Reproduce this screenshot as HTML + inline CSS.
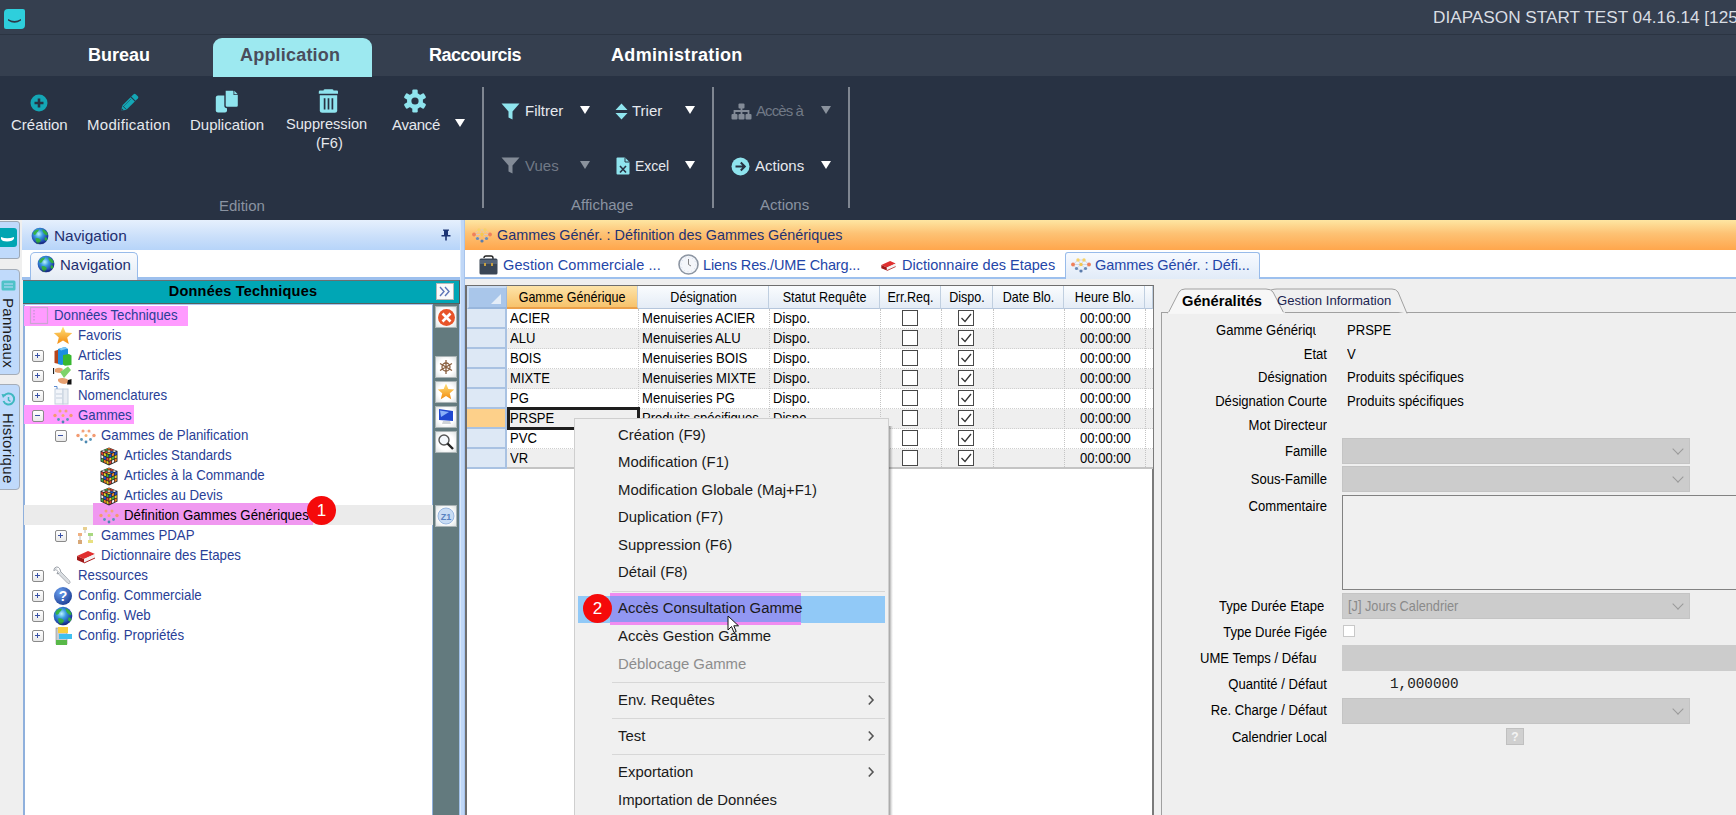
<!DOCTYPE html>
<html><head><meta charset="utf-8">
<style>
*{margin:0;padding:0;box-sizing:border-box}
html,body{width:1736px;height:815px;overflow:hidden;background:#283243;font-family:"Liberation Sans",sans-serif}
.a{position:absolute;white-space:nowrap}
#title{left:0;top:0;width:1736px;height:34px;background:#353f4f}
#tsep{left:0;top:34px;width:1736px;height:1px;background:#2b3442}
#tabs{left:0;top:35px;width:1736px;height:41px;background:#353f4f}
#ribbon{left:0;top:76px;width:1736px;height:144px;background:#283243}
.tab{font-weight:bold;font-size:18px;color:#fff;top:45px}
.rl{font-size:15px;color:#e6e9ee}
.gl{font-size:15px;color:#8a93a1}
.sep{width:2px;background:#7f8691;top:87px;height:121px}
.dd{width:0;height:0;border-left:5.5px solid transparent;border-right:5.5px solid transparent;border-top:8px solid #fff}
.ddg{border-top-color:#8a929d}
.tr{font-size:14.6px;color:#283e96;height:20px;line-height:20px;transform:scaleX(.908);transform-origin:0 50%}
.eb{width:12px;height:12px;border:1.5px solid #8a8a8a;border-radius:2px;background:linear-gradient(#fff,#e9e9e9)}
.eb:before{content:"";position:absolute;left:2px;top:3.8px;width:5px;height:1.3px;background:#3a52a8}
.eb.p:after{content:"";position:absolute;left:3.8px;top:2px;width:1.3px;height:5px;background:#3a52a8}
.vb{width:22px;height:22px;border:1px solid #a9b3b5;background:radial-gradient(#fff 55%,#dde2e3);left:435px}
.hl{background:#ff9bff}
.dt{font-size:14.5px;color:#2446a8;top:257px}
.gh{top:286px;height:23px;background:linear-gradient(#fafcfe,#e4ecf6);border-right:1px solid #c0cfe0;border-bottom:1px solid #b5c6dc}
.ght{top:286px;height:22px;font-size:14.6px;color:#000;line-height:22px;text-align:center;transform:scaleX(.86)}
.gc{font-size:15.2px;color:#000;height:20px;line-height:20px;transform:scaleX(.86);transform-origin:0 50%}
.cb{width:16px;height:16px;border:1.6px solid #484848;background:#fff}
.lb{font-size:15.2px;color:#000;text-align:right;height:18px;line-height:18px;transform:scaleX(.86);transform-origin:100% 50%}
.clip{overflow:hidden;height:18px}
.clip div{font-size:15.2px;color:#000;height:18px;line-height:18px;transform:scaleX(.86);transform-origin:0 50%}
.cmb{left:1342px;width:348px;height:26px;background:#cccccc;border:1px solid #c4c4c4}
.chev{width:8px;height:8px;border-right:1.2px solid #9a9a9a;border-bottom:1.2px solid #9a9a9a;transform:rotate(45deg)}
.mi{font-size:14.9px;color:#1a1a1a;left:618px;height:20px;line-height:20px}
.ms{left:612px;width:273px;height:1px;background:#d7d7d7}
</style></head><body>
<div class="a" id="title"></div>
<div class="a" id="tsep"></div>
<div class="a" id="tabs"></div>
<div class="a" id="ribbon"></div>
<!-- logo -->
<div class="a" style="left:4px;top:9px;width:21px;height:20px;background:#2ecfdc;border-radius:4px 2px 4px 2px"></div>
<svg class="a" style="left:4px;top:9px" width="21" height="20"><path d="M4 10 Q10.5 14 17 10 L17 11.5 Q10.5 16 4 11.5Z" fill="#2c3848"/></svg>
<div class="a" style="left:1433px;top:7px;font-size:17.2px;color:#d9dde3">DIAPASON START TEST 04.16.14 [125</div>
<!-- tabs -->
<div class="a" style="left:213px;top:38px;width:159px;height:39px;background:#9de9f0;border-radius:9px 9px 0 0"></div>
<div class="a tab" style="left:88px">Bureau</div>
<div class="a tab" style="left:240px;color:#4a4d5c;letter-spacing:0.2px">Application</div>
<div class="a tab" style="left:429px;letter-spacing:-0.5px">Raccourcis</div>
<div class="a tab" style="left:611px;letter-spacing:0.33px">Administration</div>
<!-- ribbon -->
<svg class="a" style="left:30px;top:94px" width="18" height="18" viewBox="0 0 18 18"><circle cx="9" cy="9" r="8.5" fill="#14a6b5"/><path d="M9 4.5V13.5M4.5 9H13.5" stroke="#283243" stroke-width="2.6"/></svg>
<svg class="a" style="left:119px;top:93px" width="20" height="20" viewBox="0 0 20 20"><g transform="rotate(-45 10 10)"><path d="M-1 10 L3.5 7 H15.2 V13 H3.5Z" fill="#14a6b5"/><path d="M16.2 7 H19.5 Q21 7 21 8.5 V11.5 Q21 13 19.5 13 H16.2Z" fill="#14a6b5"/><path d="M4 8.6 H14.5" stroke="#283243" stroke-width="0.7" opacity="0.6"/><path d="M3.5 7 V13" stroke="#283243" stroke-width="0.8"/><path d="M-1 10 L1.2 8.6 V11.4Z" fill="#283243"/></g></svg>
<div class="a rl" style="left:11px;top:116px">Création</div>
<div class="a rl" style="left:87px;top:116px;letter-spacing:0.3px">Modification</div>
<svg class="a" style="left:215px;top:89px" width="24" height="24" viewBox="0 0 24 24"><path d="M3 6.5 H12 V21.5 Q12 23.5 10 23.5 H3 Q0.8 23.5 0.8 21.5 V8.5 Q0.8 6.5 3 6.5Z" fill="#8fe4ee"/><path d="M10 1 H18.5 L23.5 6 V16.5 Q23.5 18.5 21.5 18.5 H12 Q10 18.5 10 16.5Z" fill="#8fe4ee" stroke="#283243" stroke-width="1.4"/><path d="M18.5 1 V6 H23.5" fill="#283243"/><path d="M19.3 1.8 L22.7 5.2 H19.3Z" fill="#8fe4ee"/></svg>
<div class="a rl" style="left:190px;top:116px">Duplication</div>
<svg class="a" style="left:318px;top:89px" width="21" height="24" viewBox="0 0 21 24"><path d="M7 0.3 H14 Q15.5 0.3 15.5 1.5 H19 Q20 1.5 20 2.8 V4.8 H0.8 V2.8 Q0.8 1.5 2 1.5 H5.5 Q5.5 0.3 7 0.3Z" fill="#8fe4ee"/><path d="M1.8 6.2 H19.2 V21.3 Q19.2 23.8 16.7 23.8 H4.3 Q1.8 23.8 1.8 21.3Z" fill="#8fe4ee"/><path d="M6.6 9.3 V20.6 M10.5 9.3 V20.6 M14.4 9.3 V20.6" stroke="#283243" stroke-width="1.7"/></svg>
<div class="a rl" style="left:286px;top:116px;font-size:14.6px">Suppression</div>
<div class="a rl" style="left:316px;top:135px;font-size:14.6px">(F6)</div>
<svg class="a" style="left:403px;top:89px" width="24" height="24" viewBox="0 0 24 24"><g fill="#8fe4ee"><circle cx="12" cy="12" r="8"/><rect x="9.3" y="0.5" width="5.4" height="23" rx="1.2"/><rect x="9.3" y="0.5" width="5.4" height="23" rx="1.2" transform="rotate(60 12 12)"/><rect x="9.3" y="0.5" width="5.4" height="23" rx="1.2" transform="rotate(120 12 12)"/></g><circle cx="12" cy="12" r="3.6" fill="#283243"/></svg>
<div class="a rl" style="left:392px;top:116px;letter-spacing:-0.3px">Avancé</div>
<div class="a dd" style="left:455px;top:119px"></div>
<div class="a gl" style="left:219px;top:197px">Edition</div>
<div class="a sep" style="left:482px"></div>
<svg class="a" style="left:501px;top:103px" width="19" height="17" viewBox="0 0 19 17"><path d="M0.5 0.5 H18.5 L11.5 8.5 V16.5 L7.5 14.5 V8.5Z" fill="#8fe4ee"/></svg>
<div class="a rl" style="left:525px;top:102px">Filtrer</div>
<div class="a dd" style="left:580px;top:106px"></div>
<svg class="a" style="left:615px;top:103px" width="13" height="17" viewBox="0 0 13 17"><path d="M6.5 0.5 L12.5 7 H0.5Z M0.5 10 H12.5 L6.5 16.5Z" fill="#8fe4ee"/></svg>
<div class="a rl" style="left:632px;top:102px">Trier</div>
<div class="a dd" style="left:685px;top:106px"></div>
<svg class="a" style="left:501px;top:157px" width="19" height="17" viewBox="0 0 19 17"><path d="M0.5 0.5 H18.5 L11.5 8.5 V16.5 L7.5 14.5 V8.5Z" fill="#838b97"/></svg>
<div class="a rl" style="left:525px;top:157px;color:#717986">Vues</div>
<div class="a dd ddg" style="left:580px;top:161px"></div>
<svg class="a" style="left:616px;top:157px" width="14" height="18" viewBox="0 0 14 18"><path d="M1.5 0.5 H9 L13.5 5 V16.5 Q13.5 17.5 12.5 17.5 H1.5 Q0.5 17.5 0.5 16.5 V1.5 Q0.5 0.5 1.5 0.5Z" fill="#8fe4ee"/><path d="M9 0.5 V5 H13.5" fill="none" stroke="#283243" stroke-width="1"/><path d="M4 9 L10 15.5 M10 9 L4 15.5" stroke="#283243" stroke-width="1.6"/></svg>
<div class="a rl" style="left:635px;top:158px;font-size:14px">Excel</div>
<div class="a dd" style="left:685px;top:161px"></div>
<div class="a gl" style="left:571px;top:196px">Affichage</div>
<div class="a sep" style="left:712px"></div>
<svg class="a" style="left:731px;top:103px" width="21" height="17" viewBox="0 0 21 17"><g fill="#838b97"><rect x="7.5" y="0.5" width="6" height="5" rx="1"/><rect x="0.5" y="11" width="6" height="5.5" rx="1"/><rect x="7.5" y="11" width="6" height="5.5" rx="1"/><rect x="14.5" y="11" width="6" height="5.5" rx="1"/></g><path d="M10.5 5 V11 M3.5 11 V8 H17.5 V11" fill="none" stroke="#838b97" stroke-width="1.8"/></svg>
<div class="a rl" style="left:756px;top:102px;color:#717986;letter-spacing:-0.9px">Accès à</div>
<div class="a dd ddg" style="left:821px;top:106px"></div>
<svg class="a" style="left:731px;top:157px" width="19" height="19" viewBox="0 0 19 19"><circle cx="9.5" cy="9.5" r="9" fill="#8fe4ee"/><path d="M4.5 9.5 H13.5 M9.8 5.5 L13.8 9.5 L9.8 13.5" fill="none" stroke="#283243" stroke-width="2"/></svg>
<div class="a rl" style="left:755px;top:157px">Actions</div>
<div class="a dd" style="left:821px;top:161px"></div>
<div class="a gl" style="left:760px;top:196px">Actions</div>
<div class="a sep" style="left:848px"></div>
<!-- left strip -->
<div class="a" style="left:0;top:220px;width:23px;height:595px;background:#efefef"></div>
<div class="a" style="left:-3px;top:221px;width:23px;height:38px;background:#c0dafb;border:1px solid #9ea8b4;border-radius:0 3px 3px 0"></div>
<div class="a" style="left:0;top:228px;width:17px;height:19px;background:#00a5b2;border-radius:0 3px 3px 0"></div>
<svg class="a" style="left:0;top:228px" width="17" height="19"><path d="M1 9 Q7 11.5 14 9 L14 10.5 Q13 13.5 7 13.5 Q2 13.5 1 11Z" fill="#fff"/></svg>
<div class="a" style="left:-3px;top:269px;width:23px;height:106px;background:#c0dafb;border:1px solid #a5adb8;border-radius:0 4px 4px 0"></div>
<svg class="a" style="left:1px;top:280px" width="15" height="11"><rect x="0.5" y="0.5" width="14" height="10" rx="1.5" fill="#4fc2c8"/><path d="M3 4 H12 M3 7 H12" stroke="#c0dafb" stroke-width="1"/></svg>
<div class="a" style="left:0px;top:298px;width:19px;height:71px"><div style="position:absolute;left:17px;top:0;transform-origin:0 0;transform:rotate(90deg);font-size:15px;color:#1b1b1b;letter-spacing:0.3px">Panneaux</div></div>
<div class="a" style="left:-3px;top:384px;width:23px;height:106px;background:#c0dafb;border:1px solid #a5adb8;border-radius:0 4px 4px 0"></div>
<svg class="a" style="left:1px;top:392px" width="15" height="15" viewBox="0 0 15 15"><path d="M3 4 A5.5 5.5 0 1 1 2.5 9" fill="none" stroke="#3fb8c0" stroke-width="2"/><path d="M0.5 2 L5 2.5 L2 6Z" fill="#3fb8c0"/><path d="M7.5 5 V8 L9.5 9.5" stroke="#3fb8c0" stroke-width="1.5" fill="none"/></svg>
<div class="a" style="left:0px;top:413px;width:19px;height:71px"><div style="position:absolute;left:17px;top:0;transform-origin:0 0;transform:rotate(90deg);font-size:15px;color:#1b1b1b;letter-spacing:0.3px">Historique</div></div>
<!-- nav panel -->
<div class="a" style="left:22px;top:220px;width:438px;height:30px;background:linear-gradient(#e6f0fd,#c8defa 60%,#b6d4f9)"></div>
<svg class="a" style="left:31px;top:227px" width="18" height="18" viewBox="0 0 20 20"><defs><radialGradient id="gg1" cx="0.42" cy="0.38" r="0.7"><stop offset="0" stop-color="#b8f4ff"/><stop offset="0.35" stop-color="#3a9ae0"/><stop offset="0.8" stop-color="#1c3aa0"/><stop offset="1" stop-color="#14206a"/></radialGradient></defs><circle cx="10" cy="10" r="9.3" fill="url(#gg1)"/><path d="M2.5 6 Q5 2.5 9 2.8 Q8.5 5 6.5 6.2 Q6 8.5 3.8 9 Q2.2 8 2.5 6Z M12.5 2.5 Q17 3.5 18.8 8 Q17.5 10 16 8.5 Q14 7.5 13 5Z M5 12.5 Q8.5 11.5 11 14.5 Q10 18.5 7 18.5 Q5 16 5 12.5Z M15.5 11.5 Q18.5 11 18 14.5 Q16 16.5 15 14Z" fill="#34b534" opacity="0.9"/><ellipse cx="10" cy="17.8" rx="5" ry="1.4" fill="#14206a" opacity="0.35"/></svg>
<div class="a" style="left:54px;top:227px;font-size:15.4px;color:#1f2f70">Navigation</div>
<svg class="a" style="left:441px;top:229px" width="10" height="12" viewBox="0 0 10 12"><path d="M2 0.5 H8 V1.8 H7 V6 H9.5 V7.5 H5.8 V11.5 H4.2 V7.5 H0.5 V6 H3 V1.8 H2Z" fill="#1c3474"/></svg>
<div class="a" style="left:22px;top:250px;width:438px;height:28px;background:#fff"></div>
<div class="a" style="left:22px;top:277px;width:438px;height:3px;background:#9dc0ee"></div>
<div class="a" style="left:30px;top:252px;width:108px;height:28px;background:linear-gradient(#f9fbfe,#e4ebf4);border:1px solid #98bbea;border-bottom:none;border-radius:5px 5px 0 0"></div>
<svg class="a" style="left:37px;top:255px" width="18" height="18" viewBox="0 0 20 20"><defs><radialGradient id="gg2" cx="0.42" cy="0.38" r="0.7"><stop offset="0" stop-color="#b8f4ff"/><stop offset="0.35" stop-color="#3a9ae0"/><stop offset="0.8" stop-color="#1c3aa0"/><stop offset="1" stop-color="#14206a"/></radialGradient></defs><circle cx="10" cy="10" r="9.3" fill="url(#gg2)"/><path d="M2.5 6 Q5 2.5 9 2.8 Q8.5 5 6.5 6.2 Q6 8.5 3.8 9 Q2.2 8 2.5 6Z M12.5 2.5 Q17 3.5 18.8 8 Q17.5 10 16 8.5 Q14 7.5 13 5Z M5 12.5 Q8.5 11.5 11 14.5 Q10 18.5 7 18.5 Q5 16 5 12.5Z M15.5 11.5 Q18.5 11 18 14.5 Q16 16.5 15 14Z" fill="#34b534" opacity="0.9"/><ellipse cx="10" cy="17.8" rx="5" ry="1.4" fill="#14206a" opacity="0.35"/></svg>
<div class="a" style="left:60px;top:256px;font-size:15px;color:#1f2f70">Navigation</div>
<div class="a" style="left:23px;top:280px;width:437px;height:24px;background:#00a6b5;border-top:1px solid #6a6f70;border-bottom:1px solid #55605f;border-right:1px solid #555"></div>
<div class="a" style="left:24px;top:283px;width:438px;text-align:center;font-size:14.5px;font-weight:bold;color:#000;letter-spacing:0.2px">Données Techniques</div>
<div class="a" style="left:436px;top:283px;width:18px;height:17px;background:#fafafa;border:1px solid #b8b8b8"></div>
<svg class="a" style="left:438px;top:286px" width="14" height="11" viewBox="0 0 14 11"><path d="M2 1 L6 5.5 L2 10 M7 1 L11 5.5 L7 10" fill="none" stroke="#5f76b8" stroke-width="1.4"/></svg>
<div class="a" style="left:23px;top:304px;width:410px;height:511px;background:#fff;border-left:2px solid #8fb0dc;border-top:1px solid #a9c6ee;border-right:1px solid #8fb0dc"></div>
<div class="a" style="left:433px;top:304px;width:27px;height:511px;background:#637a7e"></div>
<div class="a" style="left:459px;top:304px;width:1px;height:511px;background:#a0bfe8"></div>
<div class="a" style="left:460px;top:220px;width:5px;height:595px;background:#bfd7f7;border-left:1px solid #d8e8fb;border-right:1px solid #a7c4ec"></div>
<div class="a" style="left:24px;top:505px;width:409px;height:20px;background:#ebebeb"></div>
<div class="a hl" style="left:24px;top:306px;width:164px;height:20px"></div>
<div class="a hl" style="left:24px;top:405px;width:110px;height:19px"></div>
<div class="a hl" style="left:93px;top:503px;width:220px;height:22px;background:#f098f0"></div>
<svg class="a" style="left:29px;top:306px" width="20" height="20" viewBox="0 0 20 20"><rect x="1.5" y="1.5" width="17" height="16" fill="none" stroke="#c9a6d0" stroke-width="1.2"/><path d="M5 4 V15" stroke="#b490c8" stroke-dasharray="1.5 1.5"/></svg>
<div class="a tr" style="left:54px;top:305px;color:#283e96">Données Techniques</div>
<svg class="a" style="left:53px;top:326px" width="20" height="20" viewBox="0 0 20 20"><defs><linearGradient id="gs4" x1="0" y1="0" x2="0" y2="1"><stop offset="0" stop-color="#ffe27a"/><stop offset="1" stop-color="#f28c10"/></linearGradient></defs><path d="M10 0.5 L12.6 6.6 L19.2 7.1 L14.2 11.4 L15.8 18 L10 14.4 L4.2 18 L5.8 11.4 L0.8 7.1 L7.4 6.6Z" fill="url(#gs4)"/></svg>
<div class="a tr" style="left:78px;top:325px;color:#283e96">Favoris</div>
<div class="a eb p" style="left:32px;top:350px"></div>
<svg class="a" style="left:53px;top:346px" width="20" height="20" viewBox="0 0 20 20"><path d="M1.5 5 L6 3.5 V18 L1.5 17Z" fill="#b5451b"/><path d="M5 3 L12 1 L15 3 V18 L8 19 L5 18Z" fill="#1d8ee0"/><path d="M6 2.8 L12 1 L14.5 2.5 L8 4.5Z" fill="#7cc8f5"/><path d="M10 9 L16 8 L18.5 9.5 V19 L12 19.8 L10 18.5Z" fill="#38b830"/></svg>
<div class="a tr" style="left:78px;top:345px;color:#283e96">Articles</div>
<div class="a eb p" style="left:32px;top:370px"></div>
<svg class="a" style="left:53px;top:366px" width="20" height="20" viewBox="0 0 20 20"><path d="M0.5 2 V8" stroke="#222" stroke-width="1.3"/><path d="M2 3 Q6 0.5 10 3 L8 7 Q4 7 2 6Z" fill="#e6a070"/><path d="M7 6 L15 0.5 L18 4 L11 12Z" fill="#7ed36a"/><path d="M5 13 Q9 11 14 13 L17 16 L12 18 Q7 18 5 15Z" fill="#e6a070"/><path d="M15 14 L18.5 13 V18.5 H14Z" fill="#111"/></svg>
<div class="a tr" style="left:78px;top:365px;color:#283e96">Tarifs</div>
<div class="a eb p" style="left:32px;top:390px"></div>
<svg class="a" style="left:53px;top:386px" width="20" height="20" viewBox="0 0 20 20"><rect x="2" y="3" width="8" height="15" fill="#f2f5fa" stroke="#c4cfdd"/><rect x="10" y="3" width="5" height="15" fill="#e8edf3" stroke="#c4cfdd"/><path d="M3 8 H9 M3 12 H9" stroke="#c4cfdd"/><path d="M1 0.5 H4 V3" stroke="#5b8bd0" fill="none"/></svg>
<div class="a tr" style="left:78px;top:385px;color:#283e96">Nomenclatures</div>
<div class="a eb m" style="left:32px;top:410px"></div>
<svg class="a" style="left:53px;top:406px" width="20" height="20" viewBox="0 0 20 20"><g transform="translate(0 3)"><g stroke="#d8c8d8" stroke-width="0.6" fill="none" stroke-dasharray="1 1"><path d="M2 6.5 L7 2 L13 2 L18 6.5 L14.5 10.5 L10 13 L5.5 10.5Z"/></g><g><circle cx="7" cy="2" r="1.5" fill="#f3a27a"/><circle cx="13" cy="2" r="1.5" fill="#f3a27a"/><circle cx="2" cy="6.5" r="1.7" fill="#f39a70"/><circle cx="10" cy="6.5" r="1.5" fill="#f3b070"/><circle cx="18" cy="6.5" r="1.7" fill="#f39a70"/><circle cx="5.5" cy="10.5" r="1.4" fill="#5a98b8"/><circle cx="14.5" cy="10.5" r="1.4" fill="#5a98b8"/><circle cx="10" cy="13" r="1.4" fill="#4a88b0"/></g></g></svg>
<div class="a tr" style="left:78px;top:405px;color:#283e96">Gammes</div>
<div class="a eb m" style="left:55px;top:430px"></div>
<svg class="a" style="left:76px;top:426px" width="20" height="20" viewBox="0 0 20 20"><g transform="translate(0 3)"><g stroke="#d8c8d8" stroke-width="0.6" fill="none" stroke-dasharray="1 1"><path d="M2 6.5 L7 2 L13 2 L18 6.5 L14.5 10.5 L10 13 L5.5 10.5Z"/></g><g><circle cx="7" cy="2" r="1.5" fill="#f3a27a"/><circle cx="13" cy="2" r="1.5" fill="#f3a27a"/><circle cx="2" cy="6.5" r="1.7" fill="#f39a70"/><circle cx="10" cy="6.5" r="1.5" fill="#f3b070"/><circle cx="18" cy="6.5" r="1.7" fill="#f39a70"/><circle cx="5.5" cy="10.5" r="1.4" fill="#5a98b8"/><circle cx="14.5" cy="10.5" r="1.4" fill="#5a98b8"/><circle cx="10" cy="13" r="1.4" fill="#4a88b0"/></g></g></svg>
<div class="a tr" style="left:101px;top:425px;color:#283e96">Gammes de Planification</div>
<svg class="a" style="left:99px;top:446px" width="20" height="20" viewBox="0 0 20 20"><path d="M1.5 5 L10 1.5 L18.5 5 V15.5 L10 19.5 L1.5 15.5Z" fill="#2a2a2a"/><path d="M2.31 5.84 L4.29 6.70 L4.29 9.23 L2.31 8.37Z" fill="#e84030"/><path d="M2.31 9.17 L4.29 10.03 L4.29 12.56 L2.31 11.70Z" fill="#f0f0f0"/><path d="M2.31 12.50 L4.29 13.36 L4.29 15.90 L2.31 15.04Z" fill="#40b040"/><path d="M4.91 6.97 L6.89 7.83 L6.89 10.36 L4.91 9.50Z" fill="#f0d020"/><path d="M4.91 10.30 L6.89 11.16 L6.89 13.70 L4.91 12.84Z" fill="#2050d0"/><path d="M4.91 13.64 L6.89 14.50 L6.89 17.03 L4.91 16.17Z" fill="#f08020"/><path d="M7.51 8.10 L9.49 8.96 L9.49 11.50 L7.51 10.64Z" fill="#40b040"/><path d="M7.51 11.44 L9.49 12.30 L9.49 14.83 L7.51 13.97Z" fill="#e84030"/><path d="M7.51 14.77 L9.49 15.63 L9.49 18.16 L7.51 17.30Z" fill="#f0d020"/><path d="M10.32 8.96 L12.35 8.10 L12.35 10.64 L10.32 11.50Z" fill="#2050d0"/><path d="M10.32 12.30 L12.35 11.44 L12.35 13.97 L10.32 14.83Z" fill="#f0d020"/><path d="M10.32 15.63 L12.35 14.77 L12.35 17.30 L10.32 18.16Z" fill="#e84030"/><path d="M12.99 7.83 L15.01 6.97 L15.01 9.50 L12.99 10.36Z" fill="#f08020"/><path d="M12.99 11.16 L15.01 10.30 L15.01 12.84 L12.99 13.70Z" fill="#40b040"/><path d="M12.99 14.50 L15.01 13.64 L15.01 16.17 L12.99 17.03Z" fill="#f0f0f0"/><path d="M15.65 6.70 L17.68 5.84 L17.68 8.37 L15.65 9.23Z" fill="#2050d0"/><path d="M15.65 10.03 L17.68 9.17 L17.68 11.70 L15.65 12.56Z" fill="#f0d020"/><path d="M15.65 13.36 L17.68 12.50 L17.68 15.04 L15.65 15.90Z" fill="#f08020"/><path d="M2.64 5.10 L4.67 4.24 L6.69 5.10 L4.67 5.96Z" fill="#f0f0f0"/><path d="M5.31 6.23 L7.33 5.37 L9.36 6.23 L7.33 7.09Z" fill="#e84030"/><path d="M7.97 7.37 L10.00 6.51 L12.03 7.37 L10.00 8.23Z" fill="#f0d020"/><path d="M5.31 3.97 L7.33 3.11 L9.36 3.97 L7.33 4.83Z" fill="#40b040"/><path d="M7.97 5.10 L10.00 4.24 L12.03 5.10 L10.00 5.96Z" fill="#f0f0f0"/><path d="M10.64 6.23 L12.67 5.37 L14.69 6.23 L12.67 7.09Z" fill="#2050d0"/><path d="M7.97 2.83 L10.00 1.97 L12.03 2.83 L10.00 3.69Z" fill="#f08020"/><path d="M10.64 3.97 L12.67 3.11 L14.69 3.97 L12.67 4.83Z" fill="#e84030"/><path d="M13.31 5.10 L15.33 4.24 L17.36 5.10 L15.33 5.96Z" fill="#f0f0f0"/></svg>
<div class="a tr" style="left:124px;top:445px;color:#283e96">Articles Standards</div>
<svg class="a" style="left:99px;top:466px" width="20" height="20" viewBox="0 0 20 20"><path d="M1.5 5 L10 1.5 L18.5 5 V15.5 L10 19.5 L1.5 15.5Z" fill="#2a2a2a"/><path d="M2.31 5.84 L4.29 6.70 L4.29 9.23 L2.31 8.37Z" fill="#e84030"/><path d="M2.31 9.17 L4.29 10.03 L4.29 12.56 L2.31 11.70Z" fill="#f0f0f0"/><path d="M2.31 12.50 L4.29 13.36 L4.29 15.90 L2.31 15.04Z" fill="#40b040"/><path d="M4.91 6.97 L6.89 7.83 L6.89 10.36 L4.91 9.50Z" fill="#f0d020"/><path d="M4.91 10.30 L6.89 11.16 L6.89 13.70 L4.91 12.84Z" fill="#2050d0"/><path d="M4.91 13.64 L6.89 14.50 L6.89 17.03 L4.91 16.17Z" fill="#f08020"/><path d="M7.51 8.10 L9.49 8.96 L9.49 11.50 L7.51 10.64Z" fill="#40b040"/><path d="M7.51 11.44 L9.49 12.30 L9.49 14.83 L7.51 13.97Z" fill="#e84030"/><path d="M7.51 14.77 L9.49 15.63 L9.49 18.16 L7.51 17.30Z" fill="#f0d020"/><path d="M10.32 8.96 L12.35 8.10 L12.35 10.64 L10.32 11.50Z" fill="#2050d0"/><path d="M10.32 12.30 L12.35 11.44 L12.35 13.97 L10.32 14.83Z" fill="#f0d020"/><path d="M10.32 15.63 L12.35 14.77 L12.35 17.30 L10.32 18.16Z" fill="#e84030"/><path d="M12.99 7.83 L15.01 6.97 L15.01 9.50 L12.99 10.36Z" fill="#f08020"/><path d="M12.99 11.16 L15.01 10.30 L15.01 12.84 L12.99 13.70Z" fill="#40b040"/><path d="M12.99 14.50 L15.01 13.64 L15.01 16.17 L12.99 17.03Z" fill="#f0f0f0"/><path d="M15.65 6.70 L17.68 5.84 L17.68 8.37 L15.65 9.23Z" fill="#2050d0"/><path d="M15.65 10.03 L17.68 9.17 L17.68 11.70 L15.65 12.56Z" fill="#f0d020"/><path d="M15.65 13.36 L17.68 12.50 L17.68 15.04 L15.65 15.90Z" fill="#f08020"/><path d="M2.64 5.10 L4.67 4.24 L6.69 5.10 L4.67 5.96Z" fill="#f0f0f0"/><path d="M5.31 6.23 L7.33 5.37 L9.36 6.23 L7.33 7.09Z" fill="#e84030"/><path d="M7.97 7.37 L10.00 6.51 L12.03 7.37 L10.00 8.23Z" fill="#f0d020"/><path d="M5.31 3.97 L7.33 3.11 L9.36 3.97 L7.33 4.83Z" fill="#40b040"/><path d="M7.97 5.10 L10.00 4.24 L12.03 5.10 L10.00 5.96Z" fill="#f0f0f0"/><path d="M10.64 6.23 L12.67 5.37 L14.69 6.23 L12.67 7.09Z" fill="#2050d0"/><path d="M7.97 2.83 L10.00 1.97 L12.03 2.83 L10.00 3.69Z" fill="#f08020"/><path d="M10.64 3.97 L12.67 3.11 L14.69 3.97 L12.67 4.83Z" fill="#e84030"/><path d="M13.31 5.10 L15.33 4.24 L17.36 5.10 L15.33 5.96Z" fill="#f0f0f0"/></svg>
<div class="a tr" style="left:124px;top:465px;color:#283e96">Articles à la Commande</div>
<svg class="a" style="left:99px;top:486px" width="20" height="20" viewBox="0 0 20 20"><path d="M1.5 5 L10 1.5 L18.5 5 V15.5 L10 19.5 L1.5 15.5Z" fill="#2a2a2a"/><path d="M2.31 5.84 L4.29 6.70 L4.29 9.23 L2.31 8.37Z" fill="#e84030"/><path d="M2.31 9.17 L4.29 10.03 L4.29 12.56 L2.31 11.70Z" fill="#f0f0f0"/><path d="M2.31 12.50 L4.29 13.36 L4.29 15.90 L2.31 15.04Z" fill="#40b040"/><path d="M4.91 6.97 L6.89 7.83 L6.89 10.36 L4.91 9.50Z" fill="#f0d020"/><path d="M4.91 10.30 L6.89 11.16 L6.89 13.70 L4.91 12.84Z" fill="#2050d0"/><path d="M4.91 13.64 L6.89 14.50 L6.89 17.03 L4.91 16.17Z" fill="#f08020"/><path d="M7.51 8.10 L9.49 8.96 L9.49 11.50 L7.51 10.64Z" fill="#40b040"/><path d="M7.51 11.44 L9.49 12.30 L9.49 14.83 L7.51 13.97Z" fill="#e84030"/><path d="M7.51 14.77 L9.49 15.63 L9.49 18.16 L7.51 17.30Z" fill="#f0d020"/><path d="M10.32 8.96 L12.35 8.10 L12.35 10.64 L10.32 11.50Z" fill="#2050d0"/><path d="M10.32 12.30 L12.35 11.44 L12.35 13.97 L10.32 14.83Z" fill="#f0d020"/><path d="M10.32 15.63 L12.35 14.77 L12.35 17.30 L10.32 18.16Z" fill="#e84030"/><path d="M12.99 7.83 L15.01 6.97 L15.01 9.50 L12.99 10.36Z" fill="#f08020"/><path d="M12.99 11.16 L15.01 10.30 L15.01 12.84 L12.99 13.70Z" fill="#40b040"/><path d="M12.99 14.50 L15.01 13.64 L15.01 16.17 L12.99 17.03Z" fill="#f0f0f0"/><path d="M15.65 6.70 L17.68 5.84 L17.68 8.37 L15.65 9.23Z" fill="#2050d0"/><path d="M15.65 10.03 L17.68 9.17 L17.68 11.70 L15.65 12.56Z" fill="#f0d020"/><path d="M15.65 13.36 L17.68 12.50 L17.68 15.04 L15.65 15.90Z" fill="#f08020"/><path d="M2.64 5.10 L4.67 4.24 L6.69 5.10 L4.67 5.96Z" fill="#f0f0f0"/><path d="M5.31 6.23 L7.33 5.37 L9.36 6.23 L7.33 7.09Z" fill="#e84030"/><path d="M7.97 7.37 L10.00 6.51 L12.03 7.37 L10.00 8.23Z" fill="#f0d020"/><path d="M5.31 3.97 L7.33 3.11 L9.36 3.97 L7.33 4.83Z" fill="#40b040"/><path d="M7.97 5.10 L10.00 4.24 L12.03 5.10 L10.00 5.96Z" fill="#f0f0f0"/><path d="M10.64 6.23 L12.67 5.37 L14.69 6.23 L12.67 7.09Z" fill="#2050d0"/><path d="M7.97 2.83 L10.00 1.97 L12.03 2.83 L10.00 3.69Z" fill="#f08020"/><path d="M10.64 3.97 L12.67 3.11 L14.69 3.97 L12.67 4.83Z" fill="#e84030"/><path d="M13.31 5.10 L15.33 4.24 L17.36 5.10 L15.33 5.96Z" fill="#f0f0f0"/></svg>
<div class="a tr" style="left:124px;top:485px;color:#283e96">Articles au Devis</div>
<svg class="a" style="left:99px;top:506px" width="20" height="20" viewBox="0 0 20 20"><g transform="translate(0 3)"><g stroke="#d8c8d8" stroke-width="0.6" fill="none" stroke-dasharray="1 1"><path d="M2 6.5 L7 2 L13 2 L18 6.5 L14.5 10.5 L10 13 L5.5 10.5Z"/></g><g><circle cx="7" cy="2" r="1.5" fill="#f3a27a"/><circle cx="13" cy="2" r="1.5" fill="#f3a27a"/><circle cx="2" cy="6.5" r="1.7" fill="#f39a70"/><circle cx="10" cy="6.5" r="1.5" fill="#f3b070"/><circle cx="18" cy="6.5" r="1.7" fill="#f39a70"/><circle cx="5.5" cy="10.5" r="1.4" fill="#5a98b8"/><circle cx="14.5" cy="10.5" r="1.4" fill="#5a98b8"/><circle cx="10" cy="13" r="1.4" fill="#4a88b0"/></g></g></svg>
<div class="a tr" style="left:124px;top:505px;color:#000">Définition Gammes Génériques</div>
<div class="a eb p" style="left:55px;top:530px"></div>
<svg class="a" style="left:76px;top:526px" width="20" height="20" viewBox="0 0 20 20"><rect x="7" y="1" width="4" height="3" fill="#e8d090"/><rect x="2" y="7" width="4" height="3" fill="#f0b080"/><rect x="12" y="7" width="5" height="3" fill="#a8d880"/><rect x="2" y="14" width="4" height="4" fill="#d8a878"/><rect x="12" y="14" width="5" height="3" fill="#e8e080"/><path d="M9 4 V7 M4 10 V14 M14 10 V14" stroke="#bbb"/></svg>
<div class="a tr" style="left:101px;top:525px;color:#283e96">Gammes PDAP</div>
<svg class="a" style="left:76px;top:546px" width="20" height="20" viewBox="0 0 20 20"><path d="M1 10 L12 5 L19 8 L8 13Z" fill="#e03030"/><path d="M1 10 L8 13 V17 L1 14Z" fill="#a01818"/><path d="M8 13 L19 8 V12 L8 17Z" fill="#f2f2f2"/><path d="M8 17 L19 12" stroke="#b02020"/></svg>
<div class="a tr" style="left:101px;top:545px;color:#283e96">Dictionnaire des Etapes</div>
<div class="a eb p" style="left:32px;top:570px"></div>
<svg class="a" style="left:53px;top:566px" width="20" height="20" viewBox="0 0 20 20"><path d="M3.5 1 Q1 1.5 0.8 4.5 L3 3.5 L5 5.5 L4 7.8 Q7 7.8 7.6 5.6 L16.5 15 Q17.5 16.3 16.6 17.2 Q15.6 18 14.6 17 L5.8 8.2" fill="none" stroke="#8a9098" stroke-width="0.9"/><path d="M3.5 1.6 Q1.6 2.2 1.3 4 L3 3.2 L5.6 5.6 L4.6 7.3 Q6.8 7.1 7.2 5.4 L16.2 15.2 Q17 16.3 16.4 16.8 Q15.7 17.4 14.8 16.6 L6 7.6" fill="#d8dce0"/><path d="M3.5 1 Q5.5 0.8 6.5 2.5 Q7.5 4 7.6 5.6" fill="none" stroke="#8a9098" stroke-width="0.9"/></svg>
<div class="a tr" style="left:78px;top:565px;color:#283e96">Ressources</div>
<div class="a eb p" style="left:32px;top:590px"></div>
<svg class="a" style="left:53px;top:586px" width="20" height="20" viewBox="0 0 20 20"><defs><radialGradient id="gh17" cx="0.35" cy="0.3" r="0.8"><stop offset="0" stop-color="#6aa0f0"/><stop offset="1" stop-color="#1a3a90"/></radialGradient></defs><circle cx="10" cy="10" r="9" fill="url(#gh17)"/><text x="10" y="15" font-size="14" font-weight="bold" text-anchor="middle" fill="#fff" font-family="Liberation Sans">?</text></svg>
<div class="a tr" style="left:78px;top:585px;color:#283e96">Config. Commerciale</div>
<div class="a eb p" style="left:32px;top:610px"></div>
<svg class="a" style="left:53px;top:606px" width="20" height="20" viewBox="0 0 20 20"><defs><radialGradient id="gg18" cx="0.42" cy="0.38" r="0.7"><stop offset="0" stop-color="#b8f4ff"/><stop offset="0.35" stop-color="#3a9ae0"/><stop offset="0.8" stop-color="#1c3aa0"/><stop offset="1" stop-color="#14206a"/></radialGradient></defs><circle cx="10" cy="10" r="9.3" fill="url(#gg18)"/><path d="M2.5 6 Q5 2.5 9 2.8 Q8.5 5 6.5 6.2 Q6 8.5 3.8 9 Q2.2 8 2.5 6Z M12.5 2.5 Q17 3.5 18.8 8 Q17.5 10 16 8.5 Q14 7.5 13 5Z M5 12.5 Q8.5 11.5 11 14.5 Q10 18.5 7 18.5 Q5 16 5 12.5Z M15.5 11.5 Q18.5 11 18 14.5 Q16 16.5 15 14Z" fill="#34b534" opacity="0.9"/><ellipse cx="10" cy="17.8" rx="5" ry="1.4" fill="#14206a" opacity="0.35"/></svg>
<div class="a tr" style="left:78px;top:605px;color:#283e96">Config. Web</div>
<div class="a eb p" style="left:32px;top:630px"></div>
<svg class="a" style="left:53px;top:626px" width="20" height="20" viewBox="0 0 20 20"><rect x="3" y="2" width="11" height="16" fill="#c8ccd0" stroke="#888" stroke-width="0.6"/><rect x="5" y="1" width="10" height="6" fill="#f8d040"/><rect x="6" y="8" width="13" height="5" fill="#40c0f0"/><rect x="3" y="14" width="11" height="5" fill="#58b848"/></svg>
<div class="a tr" style="left:78px;top:625px;color:#283e96">Config. Propriétés</div>
<div class="a" style="left:307px;top:496px;width:29px;height:29px;border-radius:50%;background:#f50a0a;color:#fff;font-size:17px;text-align:center;line-height:29px">1</div>
<div class="a vb" style="top:306px"></div>
<div class="a vb" style="top:356px"></div>
<div class="a vb" style="top:381px"></div>
<div class="a vb" style="top:406px"></div>
<div class="a vb" style="top:431px"></div>
<div class="a vb" style="top:505px"></div>
<svg class="a" style="left:437px;top:308px" width="19" height="19" viewBox="0 0 19 19"><circle cx="9.5" cy="9.5" r="8.5" fill="#e8542a"/><path d="M5.5 5.5 L13.5 13.5 M13.5 5.5 L5.5 13.5" stroke="#fff" stroke-width="2.6"/></svg>
<svg class="a" style="left:438px;top:359px" width="16" height="16" viewBox="0 0 16 16"><g stroke="#8a6040" stroke-width="1.3" fill="none"><circle cx="8" cy="8" r="4"/><path d="M8 1 V15 M2 4.5 L14 11.5 M2 11.5 L14 4.5"/></g></svg>
<svg class="a" style="left:437px;top:383px" width="18" height="18" viewBox="0 0 20 20"><defs><linearGradient id="gs20" x1="0" y1="0" x2="0" y2="1"><stop offset="0" stop-color="#ffe27a"/><stop offset="1" stop-color="#f28c10"/></linearGradient></defs><path d="M10 0.5 L12.6 6.6 L19.2 7.1 L14.2 11.4 L15.8 18 L10 14.4 L4.2 18 L5.8 11.4 L0.8 7.1 L7.4 6.6Z" fill="url(#gs20)"/></svg>
<svg class="a" style="left:437px;top:408px" width="18" height="18" viewBox="0 0 18 18"><path d="M2 1 L16 3 V13 L2 12Z" fill="#2048d0"/><path d="M3 2.5 L12 4 L4 9Z" fill="#8ab0f8"/><path d="M6 13 H13 L14 16 H5Z" fill="#d0d4d8"/></svg>
<svg class="a" style="left:437px;top:433px" width="18" height="18" viewBox="0 0 18 18"><circle cx="7" cy="7" r="5" fill="#f4f8fc" stroke="#555" stroke-width="1.4"/><path d="M10.5 10.5 L16 16" stroke="#222" stroke-width="2.4"/></svg>
<svg class="a" style="left:437px;top:507px" width="18" height="18" viewBox="0 0 18 18"><circle cx="9" cy="9" r="8" fill="#c8dcf4" stroke="#9ab8e0"/><text x="9" y="13" font-size="9" font-weight="bold" text-anchor="middle" fill="#5a82c0" font-family="Liberation Sans">Z1</text></svg>
<!-- main -->
<div class="a" style="left:465px;top:220px;width:1271px;height:30px;background:linear-gradient(#fee6a2,#fdc274 45%,#ffa64c)"></div>
<svg class="a" style="left:472px;top:228px" width="20" height="15" viewBox="0 0 20 15"><g stroke="#c8c8d8" stroke-width="0.7" fill="none"><path d="M2 6.5 L7 2 L13 2 L18 6.5 L14.5 10.5 L10 13 L5.5 10.5Z M7 2 L10 6.5 L13 2 M2 6.5 H18 M5.5 10.5 L10 6.5 L14.5 10.5"/></g><g><circle cx="7" cy="2" r="1.7" fill="#f6d26a"/><circle cx="13" cy="2" r="1.7" fill="#f6d26a"/><circle cx="2" cy="6.5" r="1.9" fill="#f0805a"/><circle cx="10" cy="6.5" r="1.7" fill="#f4c850"/><circle cx="18" cy="6.5" r="1.9" fill="#f0805a"/><circle cx="5.5" cy="10.5" r="1.6" fill="#6a8cb8"/><circle cx="14.5" cy="10.5" r="1.6" fill="#6a8cb8"/><circle cx="10" cy="13" r="1.6" fill="#5a7cac"/></g></svg>
<div class="a" style="left:497px;top:227px;font-size:14.4px;color:#1f3272">Gammes Génér. : Définition des Gammes Génériques</div>
<div class="a" style="left:465px;top:250px;width:1271px;height:28px;background:#fff"></div>
<div class="a" style="left:465px;top:277px;width:1271px;height:2px;background:#9dc0ee"></div>
<div class="a" style="left:465px;top:279px;width:1271px;height:536px;background:#efefef"></div>
<svg class="a" style="left:478px;top:255px" width="21" height="20" viewBox="0 0 21 20"><path d="M6 3 Q6 1 8 1 H13 Q15 1 15 3 V4" fill="none" stroke="#222" stroke-width="1.4"/><path d="M1.5 5 Q1.5 3.5 3 3.5 H18 Q19.5 3.5 19.5 5 V18 Q19.5 19.5 18 19.5 H3 Q1.5 19.5 1.5 18Z" fill="#3a4656"/><path d="M2 5 H19 V9 H2Z" fill="#566478"/><rect x="6" y="8" width="2" height="3" fill="#c8a040"/><rect x="13" y="8" width="2" height="3" fill="#c8a040"/></svg>
<div class="a dt" style="left:503px;letter-spacing:0.1px">Gestion Commerciale ...</div>
<svg class="a" style="left:678px;top:254px" width="21" height="21" viewBox="0 0 21 21"><circle cx="10.5" cy="10.5" r="9.5" fill="#f4f6fa" stroke="#8d96a3" stroke-width="1.6"/><circle cx="10.5" cy="10.5" r="7.3" fill="none" stroke="#b8c8e0" stroke-width="0.6" stroke-dasharray="1 2.8"/><path d="M10.5 10.5 V5 M10.5 10.5 L13 12" stroke="#777" stroke-width="0.9"/></svg>
<div class="a dt" style="left:703px;letter-spacing:-0.14px">Liens Res./UME Charg...</div>
<svg class="a" style="left:878px;top:257px" width="21" height="16" viewBox="0 0 20 20"><path d="M1 10 L12 5 L19 8 L8 13Z" fill="#e03030"/><path d="M1 10 L8 13 V17 L1 14Z" fill="#a01818"/><path d="M8 13 L19 8 V12 L8 17Z" fill="#f2f2f2"/><path d="M8 17 L19 12" stroke="#b02020"/></svg>
<div class="a dt" style="left:902px">Dictionnaire des Etapes</div>
<div class="a" style="left:1065px;top:252px;width:195px;height:27px;background:linear-gradient(#f7faff,#e1ebf8);border:1px solid #98bbea;border-bottom:none;border-radius:3px 3px 0 0"></div>
<svg class="a" style="left:1071px;top:258px" width="20" height="15" viewBox="0 0 20 15"><g stroke="#c8c8d8" stroke-width="0.7" fill="none"><path d="M2 6.5 L7 2 L13 2 L18 6.5 L14.5 10.5 L10 13 L5.5 10.5Z M7 2 L10 6.5 L13 2 M2 6.5 H18 M5.5 10.5 L10 6.5 L14.5 10.5"/></g><g><circle cx="7" cy="2" r="1.7" fill="#f6d26a"/><circle cx="13" cy="2" r="1.7" fill="#f6d26a"/><circle cx="2" cy="6.5" r="1.9" fill="#f0805a"/><circle cx="10" cy="6.5" r="1.7" fill="#f4c850"/><circle cx="18" cy="6.5" r="1.9" fill="#f0805a"/><circle cx="5.5" cy="10.5" r="1.6" fill="#6a8cb8"/><circle cx="14.5" cy="10.5" r="1.6" fill="#6a8cb8"/><circle cx="10" cy="13" r="1.6" fill="#5a7cac"/></g></svg>
<div class="a dt" style="left:1095px;letter-spacing:-0.07px">Gammes Génér. : Défi...</div>
<!-- grid -->
<div class="a" style="left:465px;top:285px;width:689px;height:530px;background:#fff;border:1px solid #6e6e6e;border-right:2px solid #7a7a7a;border-left:2px solid #6e6e6e;border-bottom:none"></div>
<div class="a" style="left:467px;top:286px;width:40px;height:23px;background:#a9c6ea;border-top:2px solid #c9dcf3;border-left:2px solid #c9dcf3;border-right:1px solid #9fb8d8;border-bottom:2px solid #98b6dc"></div>
<svg class="a" style="left:490px;top:293px" width="12" height="12"><path d="M11 1 V11 H1Z" fill="#e4edf8"/></svg>
<div class="a gh" style="left:507px;width:131px;background:linear-gradient(#fde3a8,#f7c36c);border-bottom:2px solid #eba04a;"></div>
<div class="a ght" style="left:496px;width:152px">Gamme Générique</div>
<div class="a gh" style="left:638px;width:131px;"></div>
<div class="a ght" style="left:628px;width:151px">Désignation</div>
<div class="a gh" style="left:769px;width:111px;"></div>
<div class="a ght" style="left:759px;width:131px">Statut Requête</div>
<div class="a gh" style="left:880px;width:61px;"></div>
<div class="a ght" style="left:870px;width:81px">Err.Req.</div>
<div class="a gh" style="left:941px;width:52px;"></div>
<div class="a ght" style="left:931px;width:72px">Dispo.</div>
<div class="a gh" style="left:993px;width:71px;"></div>
<div class="a ght" style="left:983px;width:91px">Date Blo.</div>
<div class="a gh" style="left:1064px;width:81px;"></div>
<div class="a ght" style="left:1054px;width:101px">Heure Blo.</div>
<div class="a gh" style="left:1145px;width:8px;"></div>
<div class="a" style="left:506px;top:309px;width:647px;height:20px;background:#ffffff;border-bottom:1px dotted #cfcfcf"></div>
<div class="a" style="left:467px;top:309px;width:40px;height:20px;background:#dde8f5;border-bottom:2px solid #a9c2e2;border-right:2px solid #a9c2e2"></div>
<div class="a gc" style="left:510px;top:308px">ACIER</div>
<div class="a gc" style="left:642px;top:308px">Menuiseries ACIER</div>
<div class="a gc" style="left:773px;top:308px">Dispo.</div>
<div class="a cb" style="left:902px;top:310px"></div>
<div class="a cb" style="left:958px;top:310px"></div>
<svg class="a" style="left:959px;top:311px" width="14" height="14"><path d="M2.5 7 L6 10.5 L12 3" fill="none" stroke="#333" stroke-width="1.3"/></svg>
<div class="a gc" style="left:1080px;top:308px">00:00:00</div>
<div class="a" style="left:506px;top:329px;width:647px;height:20px;background:#efefef;border-bottom:1px dotted #cfcfcf"></div>
<div class="a" style="left:467px;top:329px;width:40px;height:20px;background:#dde8f5;border-bottom:2px solid #a9c2e2;border-right:2px solid #a9c2e2"></div>
<div class="a gc" style="left:510px;top:328px">ALU</div>
<div class="a gc" style="left:642px;top:328px">Menuiseries ALU</div>
<div class="a gc" style="left:773px;top:328px">Dispo.</div>
<div class="a cb" style="left:902px;top:330px"></div>
<div class="a cb" style="left:958px;top:330px"></div>
<svg class="a" style="left:959px;top:331px" width="14" height="14"><path d="M2.5 7 L6 10.5 L12 3" fill="none" stroke="#333" stroke-width="1.3"/></svg>
<div class="a gc" style="left:1080px;top:328px">00:00:00</div>
<div class="a" style="left:506px;top:349px;width:647px;height:20px;background:#ffffff;border-bottom:1px dotted #cfcfcf"></div>
<div class="a" style="left:467px;top:349px;width:40px;height:20px;background:#dde8f5;border-bottom:2px solid #a9c2e2;border-right:2px solid #a9c2e2"></div>
<div class="a gc" style="left:510px;top:348px">BOIS</div>
<div class="a gc" style="left:642px;top:348px">Menuiseries BOIS</div>
<div class="a gc" style="left:773px;top:348px">Dispo.</div>
<div class="a cb" style="left:902px;top:350px"></div>
<div class="a cb" style="left:958px;top:350px"></div>
<svg class="a" style="left:959px;top:351px" width="14" height="14"><path d="M2.5 7 L6 10.5 L12 3" fill="none" stroke="#333" stroke-width="1.3"/></svg>
<div class="a gc" style="left:1080px;top:348px">00:00:00</div>
<div class="a" style="left:506px;top:369px;width:647px;height:20px;background:#efefef;border-bottom:1px dotted #cfcfcf"></div>
<div class="a" style="left:467px;top:369px;width:40px;height:20px;background:#dde8f5;border-bottom:2px solid #a9c2e2;border-right:2px solid #a9c2e2"></div>
<div class="a gc" style="left:510px;top:368px">MIXTE</div>
<div class="a gc" style="left:642px;top:368px">Menuiseries MIXTE</div>
<div class="a gc" style="left:773px;top:368px">Dispo.</div>
<div class="a cb" style="left:902px;top:370px"></div>
<div class="a cb" style="left:958px;top:370px"></div>
<svg class="a" style="left:959px;top:371px" width="14" height="14"><path d="M2.5 7 L6 10.5 L12 3" fill="none" stroke="#333" stroke-width="1.3"/></svg>
<div class="a gc" style="left:1080px;top:368px">00:00:00</div>
<div class="a" style="left:506px;top:389px;width:647px;height:20px;background:#ffffff;border-bottom:1px dotted #cfcfcf"></div>
<div class="a" style="left:467px;top:389px;width:40px;height:20px;background:#dde8f5;border-bottom:2px solid #a9c2e2;border-right:2px solid #a9c2e2"></div>
<div class="a gc" style="left:510px;top:388px">PG</div>
<div class="a gc" style="left:642px;top:388px">Menuiseries PG</div>
<div class="a gc" style="left:773px;top:388px">Dispo.</div>
<div class="a cb" style="left:902px;top:390px"></div>
<div class="a cb" style="left:958px;top:390px"></div>
<svg class="a" style="left:959px;top:391px" width="14" height="14"><path d="M2.5 7 L6 10.5 L12 3" fill="none" stroke="#333" stroke-width="1.3"/></svg>
<div class="a gc" style="left:1080px;top:388px">00:00:00</div>
<div class="a" style="left:506px;top:409px;width:647px;height:20px;background:#efefef;border-bottom:1px dotted #cfcfcf"></div>
<div class="a" style="left:467px;top:409px;width:40px;height:20px;background:#fdd08a;border-bottom:2px solid #a9c2e2;border-right:2px solid #a9c2e2"></div>
<div class="a gc" style="left:510px;top:408px">PRSPE</div>
<div class="a gc" style="left:642px;top:408px">Produits spécifiques</div>
<div class="a gc" style="left:773px;top:408px">Dispo.</div>
<div class="a cb" style="left:902px;top:410px"></div>
<div class="a cb" style="left:958px;top:410px"></div>
<svg class="a" style="left:959px;top:411px" width="14" height="14"><path d="M2.5 7 L6 10.5 L12 3" fill="none" stroke="#333" stroke-width="1.3"/></svg>
<div class="a gc" style="left:1080px;top:408px">00:00:00</div>
<div class="a" style="left:506px;top:429px;width:647px;height:20px;background:#ffffff;border-bottom:1px dotted #cfcfcf"></div>
<div class="a" style="left:467px;top:429px;width:40px;height:20px;background:#dde8f5;border-bottom:2px solid #a9c2e2;border-right:2px solid #a9c2e2"></div>
<div class="a gc" style="left:510px;top:428px">PVC</div>
<div class="a gc" style="left:642px;top:428px">Menuiseries PVC</div>
<div class="a gc" style="left:773px;top:428px">Dispo.</div>
<div class="a cb" style="left:902px;top:430px"></div>
<div class="a cb" style="left:958px;top:430px"></div>
<svg class="a" style="left:959px;top:431px" width="14" height="14"><path d="M2.5 7 L6 10.5 L12 3" fill="none" stroke="#333" stroke-width="1.3"/></svg>
<div class="a gc" style="left:1080px;top:428px">00:00:00</div>
<div class="a" style="left:506px;top:449px;width:647px;height:20px;background:#efefef;border-bottom:1px dotted #cfcfcf"></div>
<div class="a" style="left:467px;top:449px;width:40px;height:20px;background:#dde8f5;border-bottom:2px solid #a9c2e2;border-right:2px solid #a9c2e2"></div>
<div class="a gc" style="left:510px;top:448px">VR</div>
<div class="a gc" style="left:642px;top:448px">Menuiseries VR</div>
<div class="a gc" style="left:773px;top:448px">Dispo.</div>
<div class="a cb" style="left:902px;top:450px"></div>
<div class="a cb" style="left:958px;top:450px"></div>
<svg class="a" style="left:959px;top:451px" width="14" height="14"><path d="M2.5 7 L6 10.5 L12 3" fill="none" stroke="#333" stroke-width="1.3"/></svg>
<div class="a gc" style="left:1080px;top:448px">00:00:00</div>
<div class="a" style="left:638px;top:309px;width:0;height:158px;border-left:1px dotted #c4c4c4"></div>
<div class="a" style="left:769px;top:309px;width:0;height:158px;border-left:1px dotted #c4c4c4"></div>
<div class="a" style="left:880px;top:309px;width:0;height:158px;border-left:1px dotted #c4c4c4"></div>
<div class="a" style="left:941px;top:309px;width:0;height:158px;border-left:1px dotted #c4c4c4"></div>
<div class="a" style="left:993px;top:309px;width:0;height:158px;border-left:1px dotted #c4c4c4"></div>
<div class="a" style="left:1064px;top:309px;width:0;height:158px;border-left:1px dotted #c4c4c4"></div>
<div class="a" style="left:1145px;top:309px;width:0;height:158px;border-left:1px dotted #c4c4c4"></div>
<div class="a" style="left:507px;top:467px;width:646px;height:2px;background:#c4c4c4"></div>
<div class="a" style="left:507px;top:407px;width:133px;height:23px;border:3px solid #1e1e1e"></div>
<!-- details -->
<div class="a" style="left:1161px;top:312px;width:575px;height:503px;border-left:1px solid #a0a0a0;border-top:1px solid #a0a0a0"></div>
<svg class="a" style="left:1162px;top:286px" width="250" height="28" viewBox="0 0 250 28"><path d="M6 27.5 L17 6 Q19 3 23 3 H104 Q109 3 111 6 L122 27.5" fill="#f7f7f7" stroke="#a0a0a0"/><path d="M109 4 Q112 3 115 3 H230 Q234 3 236 6 L245 27.5" fill="#f0f0f0" stroke="#a0a0a0"/><path d="M6 27 H123" stroke="#f7f7f7" stroke-width="1.5"/></svg>
<div class="a" style="left:1182px;top:293px;font-size:14.7px;font-weight:bold;color:#000">Généralités</div>
<div class="a" style="left:1277px;top:293px;font-size:13.1px;color:#1b2450">Gestion Information</div>
<div class="a clip" style="left:1216px;width:100px;top:321px"><div>Gamme Générique</div></div>
<div class="a lb" style="left:1127px;width:200px;top:345px">Etat</div>
<div class="a lb" style="left:1127px;width:200px;top:368px">Désignation</div>
<div class="a lb" style="left:1127px;width:200px;top:392px">Désignation Courte</div>
<div class="a lb" style="left:1127px;width:200px;top:416px">Mot Directeur</div>
<div class="a lb" style="left:1127px;width:200px;top:442px">Famille</div>
<div class="a lb" style="left:1127px;width:200px;top:470px">Sous-Famille</div>
<div class="a lb" style="left:1127px;width:200px;top:497px">Commentaire</div>
<div class="a clip" style="left:1219px;width:105px;top:597px"><div>Type Durée Etape</div></div>
<div class="a lb" style="left:1127px;width:200px;top:623px">Type Durée Figée</div>
<div class="a clip" style="left:1200px;width:117px;top:649px"><div>UME Temps / Défaut</div></div>
<div class="a lb" style="left:1127px;width:200px;top:675px">Quantité / Défaut</div>
<div class="a lb" style="left:1127px;width:200px;top:701px">Re. Charge / Défaut</div>
<div class="a lb" style="left:1127px;width:200px;top:728px">Calendrier Local</div>
<div class="a gc" style="left:1347px;top:320px">PRSPE</div>
<div class="a gc" style="left:1347px;top:344px">V</div>
<div class="a gc" style="left:1347px;top:367px">Produits spécifiques</div>
<div class="a gc" style="left:1347px;top:391px">Produits spécifiques</div>
<div class="a cmb" style="top:438px"></div><div class="a chev" style="left:1674px;top:445px"></div>
<div class="a cmb" style="top:466px"></div><div class="a chev" style="left:1674px;top:473px"></div>
<div class="a" style="left:1342px;top:495px;width:400px;height:95px;background:#f0f0f0;border:1px solid #828282;border-right:none"></div>
<div class="a cmb" style="top:593px"></div><div class="a chev" style="left:1674px;top:600px"></div>
<div class="a gc" style="left:1348px;top:596px;font-size:14.8px;color:#8a8a8a">[J] Jours Calendrier</div>
<div class="a" style="left:1343px;top:625px;width:12px;height:12px;background:#fff;border:1px solid #c8c8c8"></div>
<div class="a" style="left:1342px;top:645px;width:400px;height:26px;background:#cccccc"></div>
<div class="a" style="left:1390px;top:675px;font-size:14.3px;font-family:'Liberation Mono',monospace;color:#222;height:18px;line-height:18px">1,000000</div>
<div class="a cmb" style="top:698px"></div><div class="a chev" style="left:1674px;top:705px"></div>
<div class="a" style="left:1506px;top:728px;width:18px;height:17px;background:#d0d0d0;border:1px solid #c0c0c0;color:#f4f4f4;font-size:12px;text-align:center;line-height:16px;font-weight:bold">?</div>
<!-- context menu -->
<div class="a" style="left:889px;top:426px;width:4px;height:400px;background:linear-gradient(90deg,rgba(0,0,0,.38),rgba(0,0,0,.12) 60%,rgba(0,0,0,0))"></div>
<div class="a" style="left:574px;top:418px;width:315px;height:400px;background:#f0f0f0;border:1px solid #cfcfcf"></div>
<div class="a" style="left:578px;top:596px;width:307px;height:27px;background:#91c9f7"></div>
<div class="a" style="left:610px;top:593px;width:191px;height:32px;background:#f08cf0"></div>
<div class="a" style="left:610px;top:596px;width:191px;height:26px;background:#9297f2"></div>
<div class="a mi" style="top:425px;color:#1a1a1a">Création (F9)</div>
<div class="a mi" style="top:452px;color:#1a1a1a">Modification (F1)</div>
<div class="a mi" style="top:480px;color:#1a1a1a">Modification Globale (Maj+F1)</div>
<div class="a mi" style="top:507px;color:#1a1a1a">Duplication (F7)</div>
<div class="a mi" style="top:535px;color:#1a1a1a">Suppression (F6)</div>
<div class="a mi" style="top:562px;color:#1a1a1a">Détail (F8)</div>
<div class="a mi" style="top:598px;color:#1a1a1a">Accès Consultation Gamme</div>
<div class="a mi" style="top:626px;color:#1a1a1a">Accès Gestion Gamme</div>
<div class="a mi" style="top:654px;color:#8d8d8d">Déblocage Gamme</div>
<div class="a mi" style="top:690px;color:#1a1a1a">Env. Requêtes</div>
<div class="a mi" style="top:726px;color:#1a1a1a">Test</div>
<div class="a mi" style="top:762px;color:#1a1a1a">Exportation</div>
<div class="a mi" style="top:790px;color:#1a1a1a">Importation de Données</div>
<div class="a ms" style="top:591px"></div>
<div class="a ms" style="top:682px"></div>
<div class="a ms" style="top:718px"></div>
<div class="a ms" style="top:754px"></div>
<svg class="a" style="left:867px;top:694px" width="8" height="12"><path d="M1.8 1.5 L6 6 L1.8 10.5" fill="none" stroke="#555" stroke-width="1.6"/></svg>
<svg class="a" style="left:867px;top:730px" width="8" height="12"><path d="M1.8 1.5 L6 6 L1.8 10.5" fill="none" stroke="#555" stroke-width="1.6"/></svg>
<svg class="a" style="left:867px;top:766px" width="8" height="12"><path d="M1.8 1.5 L6 6 L1.8 10.5" fill="none" stroke="#555" stroke-width="1.6"/></svg>
<div class="a" style="left:583px;top:594px;width:29px;height:29px;border-radius:50%;background:#f50a0a;color:#fff;font-size:17px;text-align:center;line-height:29px">2</div>
<svg class="a" style="left:727px;top:615px" width="13" height="20" viewBox="0 0 13 20"><path d="M1 1 V15 L4.5 11.5 L7 17.5 L9.2 16.5 L6.8 10.8 H11.5Z" fill="#fff" stroke="#111" stroke-width="1"/></svg>
</body></html>
